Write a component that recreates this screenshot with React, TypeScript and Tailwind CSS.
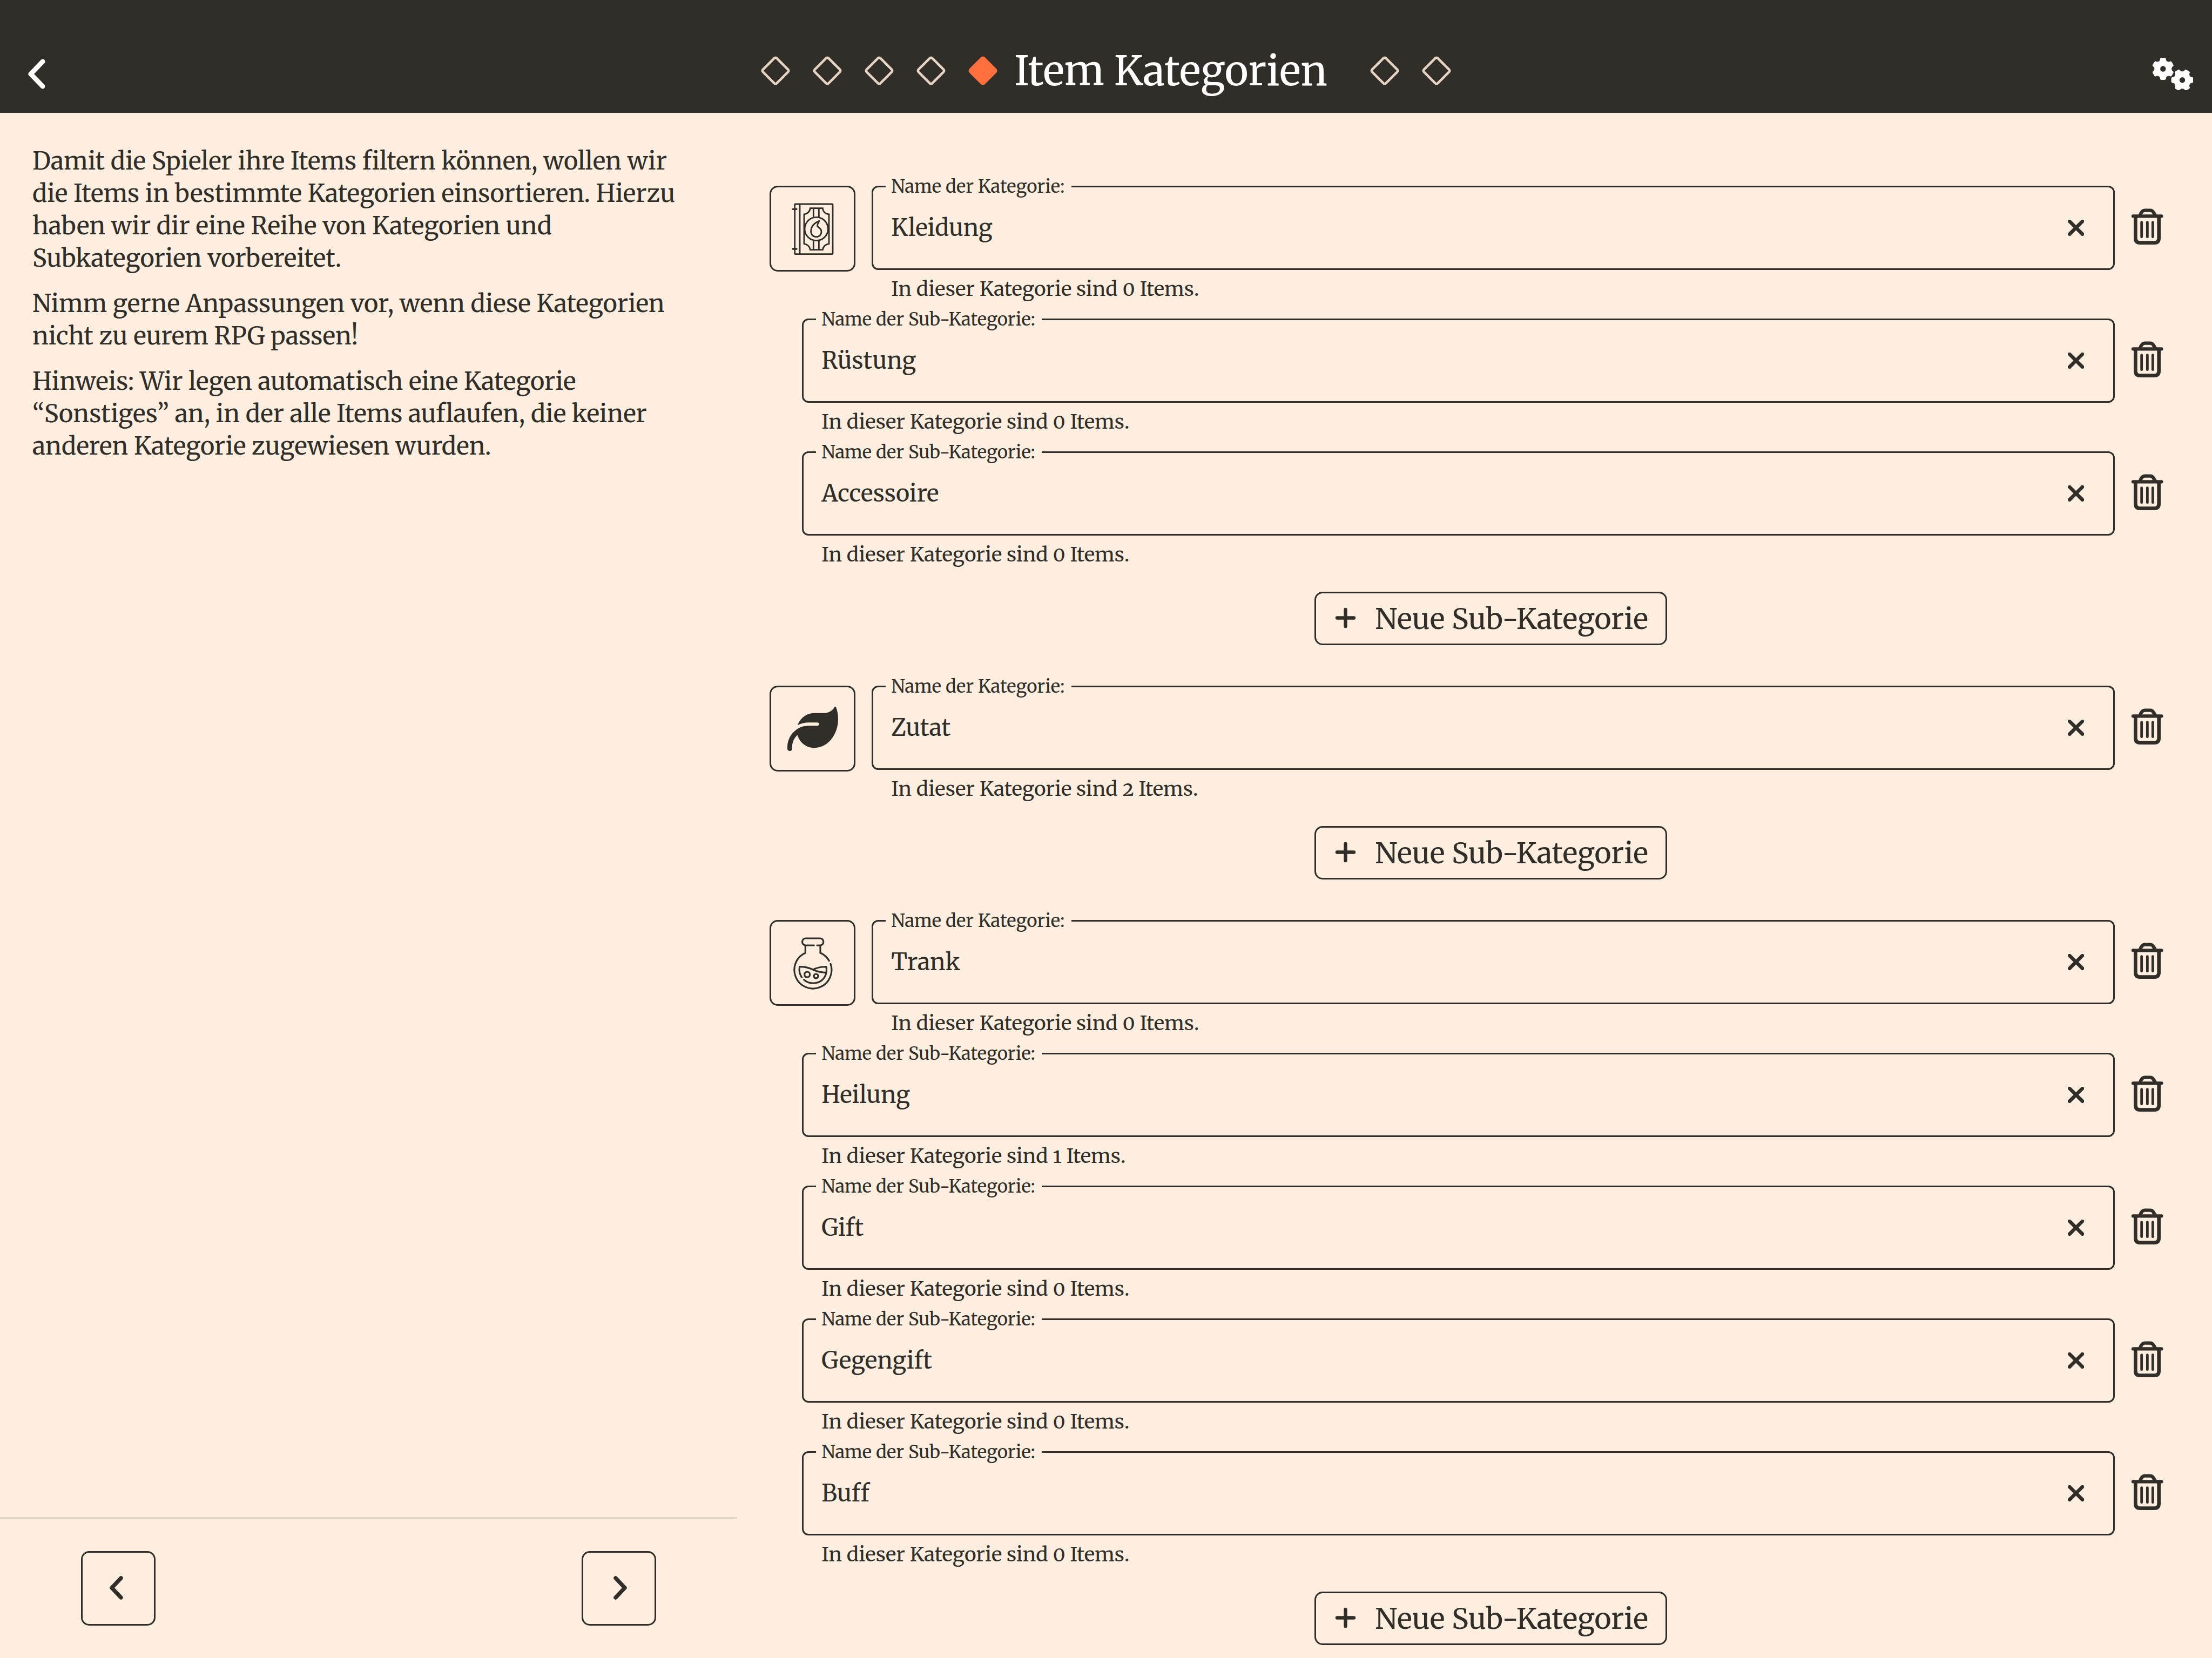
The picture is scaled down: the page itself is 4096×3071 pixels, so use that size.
import { useId, useState, type ReactNode } from "react";

type SubCategory = { name: string; items: number };
type Category = { name: string; items: number; icon: ReactNode; subs: SubCategory[] };

function SpellBookIcon() {
  return (
    <svg viewBox="16 25 360 360" className="size-[120px]" fill="none" stroke="currentColor" strokeWidth="8.5" strokeLinecap="round" strokeLinejoin="round" aria-hidden="true">
      <rect x="96" y="67" width="211" height="278" rx="4" />
      <path d="M124 69V343" />
      <path d="M85 95H106M85 316H106" strokeWidth="10" />
      <path strokeLinejoin="miter" d="M182 90H251C253 110 268 122 286 124V288C268 290 253 303 251 321H182C180 303 165 290 148 288V124C165 122 180 110 182 90Z" />
      <path d="M200 92V140M230 92V140M200 271V320M230 271V320" />
      <circle cx="216" cy="205" r="65" />
      <path d="M232 161C205 172 186 190 186 219C186 237 199 249 216 249C232 249 244 237 244 221C244 202 230 200 222 190C220 182 226 172 232 161Z" />
    </svg>
  );
}

function LeafIcon() {
  return (
    <svg viewBox="0 0 512 512" className="size-[94px]" fill="currentColor" aria-hidden="true">
      <path d="M272 96c-78.6 0-145.1 51.5-167.7 122.5c33.6-17 71.5-26.5 111.7-26.5l88 0c8.8 0 16 7.2 16 16s-7.2 16-16 16l-88 0c-16.6 0-32.7 1.9-48.3 5.4c-25.9 5.9-49.9 16.4-71.4 30.7C38.3 298.8 0 364.9 0 440l0 16c0 13.3 10.7 24 24 24s24-10.7 24-24l0-16c0-48.7 20.7-92.5 53.8-123.2C121.6 392.3 190.3 448 272 448l1 0c132.1-.7 239-130.9 239-291.4c0-42.6-7.5-83.1-21.1-119.6c-2.6-6.9-12.7-6.6-16.2-.1C455.9 72.1 418.7 96 376 96L272 96z" />
    </svg>
  );
}

function PotionIcon() {
  return (
    <svg viewBox="136 106 360 360" className="size-[120px]" fill="none" stroke="currentColor" strokeWidth="9.5" strokeLinecap="round" strokeLinejoin="round" aria-hidden="true">
      <path d="M323 187H277A19.5 19.5 0 0 1 277 148H356A19.5 19.5 0 0 1 356 187H340" />
      <path d="M275 190V229A103.5 103.5 0 1 0 415 290" />
      <path d="M358 190V229A103.5 103.5 0 0 1 407 273" />
      <path d="M255 365C243 348 239 328 243 306C275 305 295 312 318 322C345 335 365 338 388 338" />
      <path d="M318 322C340 310 365 306 391 306C395 330 393 355 370 378C345 402 295 405 267 378" />
      <circle cx="285" cy="349" r="15" />
      <circle cx="334" cy="358" r="12" />
    </svg>
  );
}

function TrashIcon() {
  return (
    <svg viewBox="0 12 288 288" className="size-24" fill="none" stroke="currentColor" strokeLinecap="round" strokeLinejoin="round" aria-hidden="true">
      <path d="M66 91H223" strokeWidth="19" />
      <path d="M79 96V214Q79 239 104 239H184Q209 239 209 214V96" strokeWidth="20" />
      <path d="M104 87L110 74Q118 59 130 59H160Q172 59 179 70L188 86" strokeWidth="19" />
      <path d="M113 125V206M145 125V206M175 125V206" strokeWidth="14.5" />
    </svg>
  );
}

function GearsIcon() {
  return (
    <svg viewBox="0 0 75 60" className="h-[60px] w-[75px]" aria-hidden="true">
      {[
        { x: 19.3, y: 20.5, turn: 0 },
        { x: 55, y: 41.3, turn: 30 },
      ].map((g) => (
        <g key={g.x} transform={`translate(${g.x} ${g.y}) rotate(${g.turn})`} fill="#fff">
          <circle r="16" />
          {[0, 60, 120].map((a) => (
            <g key={a} transform={`rotate(${a})`}>
              <rect x="-5.5" y="-20.4" width="11" height="40.8" rx="3" />
              <rect x="-6.8" y="-16.5" width="13.6" height="33" rx="3" />
            </g>
          ))}
          <circle r="5.2" fill="#312e29" />
        </g>
      ))}
    </svg>
  );
}

function Diamond({ active = false }: { active?: boolean }) {
  return (
    <svg viewBox="0 0 60 60" className="size-[60px] shrink-0" aria-hidden="true">
      <rect
        x="12"
        y="12"
        width="36"
        height="36"
        rx="3"
        transform="rotate(45 30 30)"
        fill={active ? "#ff703f" : "none"}
        stroke={active ? "#ff703f" : "#e6d5c3"}
        strokeWidth="4.5"
      />
    </svg>
  );
}

function Header() {
  return (
    <header className="grid grid-cols-[1fr_auto_1fr] items-center bg-[#312e29] pt-[53px] text-white">
      <div className="pt-3 pl-[38px]">
        <button type="button" aria-label="Zurück" className="flex size-[60px] items-center justify-center">
          <svg viewBox="0 0 60 60" className="size-[60px]" fill="none" stroke="currentColor" strokeWidth="9" strokeLinecap="round" strokeLinejoin="round" aria-hidden="true">
            <path d="M41 7L19 30L41 53" />
          </svg>
        </button>
      </div>
      <ol className="flex h-[156px] items-center gap-9">
        {[0, 1, 2, 3].map((i) => (
          <li key={i}>
            <Diamond />
          </li>
        ))}
        <li className="flex items-center gap-7 pr-10" aria-current="step">
          <Diamond active />
          <h1 className="text-[75px] leading-[96px] whitespace-nowrap">Item Kategorien</h1>
        </li>
        {[5, 6].map((i) => (
          <li key={i}>
            <Diamond />
          </li>
        ))}
      </ol>
      <div className="flex justify-end pt-3 pr-[35px]">
        <button type="button" aria-label="Einstellungen">
          <GearsIcon />
        </button>
      </div>
    </header>
  );
}

function Intro() {
  return (
    <aside className="flex flex-col">
      <div className="flex flex-col gap-6 px-[60px] pt-[59px] text-[45px] leading-[60px]">
        <p>
          Damit die Spieler ihre Items filtern können, wollen wir die Items in bestimmte Kategorien einsortieren. Hierzu
          haben wir dir eine Reihe von Kategorien und Subkategorien vorbereitet.
        </p>
        <p>Nimm gerne Anpassungen vor, wenn diese Kategorien nicht zu eurem RPG passen!</p>
        <p>
          Hinweis: Wir legen automatisch eine Kategorie “Sonstiges” an, in der alle Items auflaufen, die keiner anderen
          Kategorie zugewiesen wurden.
        </p>
      </div>
      <nav className="mt-auto flex justify-between border-t-[3px] border-[#e3d5c5] px-[150px] py-[60px]">
        <button type="button" aria-label="Vorheriger Schritt" className="flex size-[138px] items-center justify-center rounded-[15px] border-[3px] border-[#312e29]">
          <svg viewBox="0 0 60 60" className="size-[60px]" fill="none" stroke="currentColor" strokeWidth="7.5" strokeLinecap="round" strokeLinejoin="round" aria-hidden="true">
            <path d="M35 11L18 29L35 47" />
          </svg>
        </button>
        <button type="button" aria-label="Nächster Schritt" className="flex size-[138px] items-center justify-center rounded-[15px] border-[3px] border-[#312e29]">
          <svg viewBox="0 0 60 60" className="size-[60px]" fill="none" stroke="currentColor" strokeWidth="7.5" strokeLinecap="round" strokeLinejoin="round" aria-hidden="true">
            <path d="M24 11L41 29L24 47" />
          </svg>
        </button>
      </nav>
    </aside>
  );
}

function NameField({ label, name, items }: { label: string; name: string; items: number }) {
  const id = useId();
  const [value, setValue] = useState(name);
  return (
    <>
      <div className="min-w-0 flex-1">
        <fieldset className="min-w-0 rounded-xl border-[3px] border-[#312e29] px-[23px] pb-[15px]">
          <legend className="pr-3 pl-[10px] text-[33px] leading-[33px] whitespace-nowrap">
            <label htmlFor={id}>{label}</label>
          </legend>
          <div className="flex h-[120px] items-center">
            <input
              id={id}
              type="text"
              value={value}
              onChange={(e) => setValue(e.target.value)}
              aria-describedby={`${id}-hint`}
              className="h-full min-w-0 flex-1 bg-transparent pl-[10px] text-[43px] outline-none"
            />
            <button type="button" aria-label={`${label} leeren`} onClick={() => setValue("")} className="flex h-full w-[93px] items-center justify-center">
              <svg viewBox="0 0 30 30" className="size-[30px]" fill="none" stroke="currentColor" strokeWidth="6.6" strokeLinecap="round" aria-hidden="true">
                <path d="M3.3 3L27 26.6M27 3L3.3 26.6" />
              </svg>
            </button>
          </div>
        </fieldset>
        <p id={`${id}-hint`} className="h-[75px] pl-9 text-[37px] leading-[70px] oldstyle-nums">
          In dieser Kategorie sind {items} Items.
        </p>
      </div>
      <button type="button" aria-label={`${name} löschen`} className="mt-[15px] flex h-[156px] w-[120px] items-center justify-center">
        <TrashIcon />
      </button>
    </>
  );
}

function CategoryBlock({ category }: { category: Category }) {
  return (
    <section className="flex flex-col pl-[60px]">
      <div className="flex items-start pr-[60px]">
        <button type="button" aria-label={`Symbol für ${category.name}`} className="mt-[15px] mr-[30px] flex size-[159px] shrink-0 items-center justify-center rounded-[15px] border-[3px] border-[#312e29]">
          {category.icon}
        </button>
        <NameField label="Name der Kategorie:" name={category.name} items={category.items} />
      </div>
      {category.subs.map((sub) => (
        <div key={sub.name} className="flex items-start pr-[60px] pl-[60px]">
          <NameField label="Name der Sub-Kategorie:" name={sub.name} items={sub.items} />
        </div>
      ))}
      <button type="button" className="mt-[29px] flex h-[99px] items-center gap-8 self-center rounded-[15px] border-[3px] border-[#312e29] px-8 text-[53px] leading-[60px] whitespace-nowrap">
        <svg viewBox="0 0 45 45" className="size-[45px]" fill="none" stroke="currentColor" strokeWidth="6.4" strokeLinecap="round" aria-hidden="true">
          <path d="M22.5 6V37M7 21.5H38" />
        </svg>
        Neue Sub-Kategorie
      </button>
    </section>
  );
}

const categories: Category[] = [
  {
    name: "Kleidung",
    items: 0,
    icon: <SpellBookIcon />,
    subs: [
      { name: "Rüstung", items: 0 },
      { name: "Accessoire", items: 0 },
    ],
  },
  { name: "Zutat", items: 2, icon: <LeafIcon />, subs: [] },
  {
    name: "Trank",
    items: 0,
    icon: <PotionIcon />,
    subs: [
      { name: "Heilung", items: 1 },
      { name: "Gift", items: 0 },
      { name: "Gegengift", items: 0 },
      { name: "Buff", items: 0 },
    ],
  },
];

export default function App() {
  return (
    <div className="flex min-h-screen flex-col bg-[#fdeee0] font-['Merriweather','Noto_Serif','DejaVu_Serif',serif] text-[#312e29]">
      <Header />
      <div className="grid flex-1 grid-cols-[1fr_2fr]">
        <Intro />
        <main className="flex min-w-0 flex-col gap-[60px] pt-[120px]">
          {categories.map((c) => (
            <CategoryBlock key={c.name} category={c} />
          ))}
        </main>
      </div>
    </div>
  );
}
